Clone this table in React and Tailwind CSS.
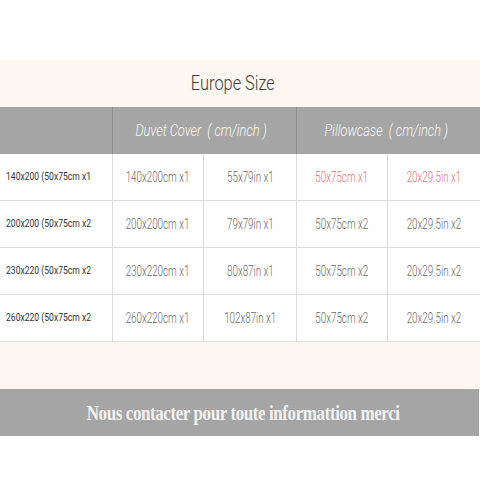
const rows = [
  { label: '140x200 (50x75cm x1', cells: ['140x200cm x1', '55x79in x1', '50x75cm x1', '20x29.5in x1'], hot: true },
  { label: '200x200 (50x75cm x2', cells: ['200x200cm x1', '79x79in x1', '50x75cm x2', '20x29.5in x2'] },
  { label: '230x220 (50x75cm x2', cells: ['230x220cm x1', '80x87in x1', '50x75cm x2', '20x29.5in x2'] },
  { label: '260x220 (50x75cm x2', cells: ['260x220cm x1', '102x87in x1', '50x75cm x2', '20x29.5in x2'] },
]

export default function App() {
  return (
    <div className="flex h-[480px] w-[480px] flex-col bg-white font-['Roboto',sans-serif]">
      <div className="h-[60px]" />
      <div className="flex h-[47px] items-center justify-center bg-[#fdf6f1] pr-[15px] text-[21px] font-light text-[#3f3f3f]">
        <span className="inline-block scale-x-[0.78]">Europe Size</span>
      </div>

      <div className="grid h-[47px] grid-cols-[113px_184px_183px] bg-[#a5a5a5] text-[16px] font-light italic text-[#f7f7f7]">
        <div className="border-r border-[#8f8f8f]" />
        <div className="flex items-center justify-center whitespace-nowrap border-r border-[#8f8f8f] pr-[6px]">
          <span className="inline-block scale-x-[0.8]">Duvet Cover&nbsp;&nbsp;( cm/inch )</span>
        </div>
        <div className="flex items-center justify-center whitespace-nowrap pr-[4px]">
          <span className="inline-block scale-x-[0.8]">Pillowcase&nbsp;&nbsp;( cm/inch )</span>
        </div>
      </div>

      {rows.map((row) => (
        <div key={row.label} className="grid h-[47px] grid-cols-[113px_91px_93px_91px_92px] border-b border-[#dcdcdc] whitespace-nowrap text-[14px] font-light text-[#6a6a6a]">
          <div className="flex items-center border-r border-[#dcdcdc] pl-[6px] text-[11px] font-normal text-[#333]">
            <span className="inline-block origin-left scale-x-[0.78]">{row.label}</span>
          </div>
          {row.cells.map((c, i) => (
            <div
              key={i}
              className={`flex items-center justify-center ${i < 3 ? 'border-r border-[#dcdcdc]' : ''} ${row.hot && i > 1 ? 'text-[#e2707c]' : ''}`}
            >
              <span className="inline-block scale-x-[0.7]">{c}</span>
            </div>
          ))}
        </div>
      ))}

      <div className="h-[47px] bg-[#fdf6f1]" />
      <div className="flex h-[47px] w-[479px] items-center justify-center whitespace-nowrap bg-[#a5a5a5] pl-[8px] font-['Liberation_Serif',serif] text-[22px] font-bold tracking-[-0.5px] text-[#f2f2f2]">
        <span className="inline-block scale-x-[0.77]">Nous contacter pour toute informattion merci</span>
      </div>
    </div>
  )
}
